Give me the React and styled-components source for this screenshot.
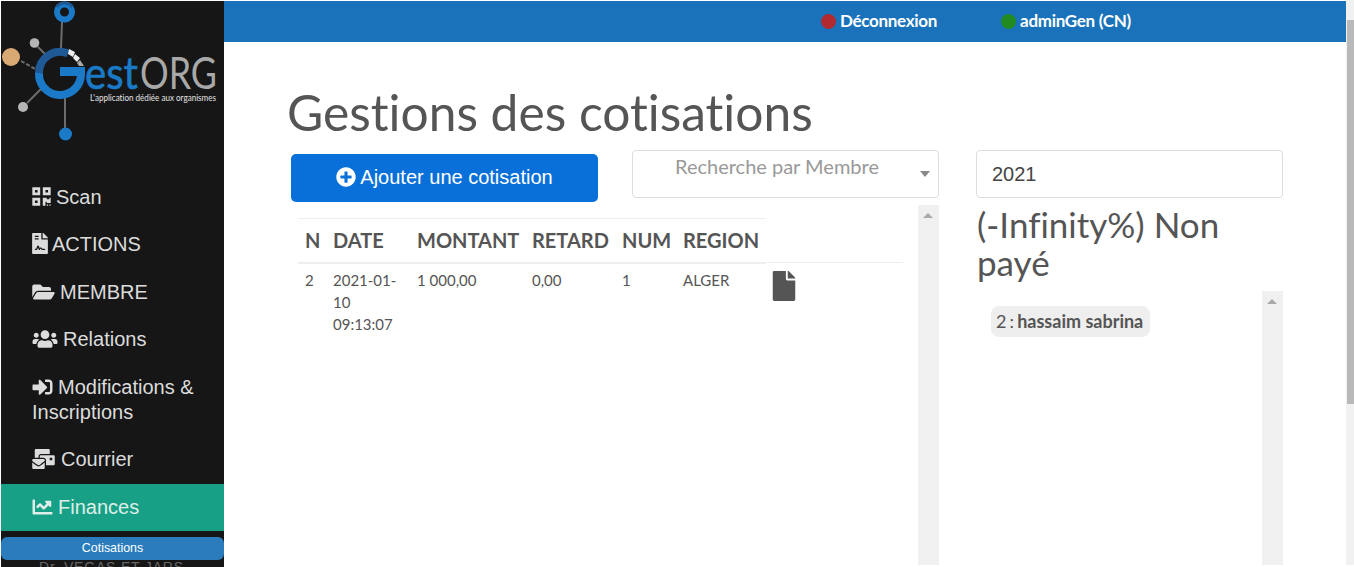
import React from "react";
import styled, { createGlobalStyle } from "styled-components";
import {
  FaQrcode, FaFileContract, FaFolderOpen, FaUsers, FaSignInAlt,
  FaMailBulk, FaChartLine, FaPlusCircle, FaFile,
} from "react-icons/fa";

const Global = createGlobalStyle`
  html, body { margin: 0; padding: 0; height: 567px; overflow: hidden; background: #fff; }
  #root { height: 567px; }
  * { box-sizing: border-box; }
`;

const Page = styled.div`
  display: flex;
  width: 1354px;
  height: 567px;
  overflow: hidden;
  padding: 1px 0 0 1px;
  background: #fff;
  font-family: "Lato", sans-serif;
  font-variant-ligatures: none;
  color: #555;
`;

const Sidebar = styled.aside`
  width: 223px;
  flex: none;
  background: #161616;
  overflow: hidden;
  font-family: "Liberation Sans", Arial, sans-serif;
`;

const LogoBox = styled.div`
  height: 172.6px;
  svg { display: block; }
`;

const NavList = styled.nav`
  display: flex;
  flex-direction: column;
`;

const NavItem = styled.div`
  padding: 11px 10px 11px 31px;
  font-size: 20px;
  line-height: 25px;
  min-height: 47px;
  margin-bottom: ${(p) => (p.$active ? "6px" : "0.5px")};
  color: ${(p) => (p.$active ? "#dfeee9" : "#dcdcdc")};
  background: ${(p) => (p.$active ? "#17a085" : "transparent")};
`;

const NavGlyph = styled.span`
  display: inline-block;
  width: ${(p) => p.$w}px;
  height: ${(p) => p.$h}px;
  margin-right: ${(p) => p.$gap || 0}px;
  vertical-align: -3px;
  svg { display: block; width: 100%; height: 100%; }
`;

const SubItem = styled.div`
  height: 23px;
  flex: none;
  border-radius: 6px;
  background: #2a7cbc;
  color: #fff;
  font-size: 12.4px;
  line-height: 22px;
  text-align: center;
`;

const SubFaded = styled.div`
  margin-top: 0;
  padding-left: 38px;
  font-size: 14px;
  line-height: 14px;
  color: #666;
  letter-spacing: 0.8px;
`;

const Main = styled.main`
  flex: 1;
  min-width: 0;
  display: flex;
  flex-direction: column;
`;

const TopBar = styled.header`
  height: 41px;
  flex: none;
  margin-right: 7px;
  background: #1a73ba;
  display: flex;
  align-items: center;
  padding-left: 597px;
  gap: 64px;
  font-weight: 700;
  font-size: 17px;
  color: #fff;
`;

const Status = styled.span`
  display: inline-flex;
  align-items: center;
  gap: 4px;
  padding-bottom: 2px;
  letter-spacing: -0.3px;
  &::before {
    content: "";
    width: 15px;
    height: 15px;
    margin-top: 2px;
    border-radius: 50%;
    background: ${(p) => p.$color};
  }
`;

const Body = styled.div`
  flex: 1;
  min-height: 0;
  padding: 39px 0 0 64px;
`;

const Title = styled.h1`
  margin: 0 0 0 -1px;
  height: 69px;
  font-weight: 400;
  font-size: 49.7px;
  line-height: 62px;
  color: #555;
`;

const Columns = styled.div`
  display: flex;
  align-items: flex-start;
`;

const LeftColumn = styled.section`
  width: 651px;
  flex: none;
`;

const Controls = styled.div`
  display: flex;
  align-items: flex-start;
  height: 55px;
`;

const AddButton = styled.button`
  width: 307px;
  height: 48px;
  margin: 4px 34px 0 3px;
  border: none;
  border-radius: 5px;
  background: #0a70d9;
  color: #fff;
  font-family: "Liberation Sans", Arial, sans-serif;
  font-size: 20px;
  display: flex;
  align-items: center;
  justify-content: center;
  gap: 4px;
  padding: 0 0 2px;
`;

const Select = styled.div`
  width: 307px;
  height: 48px;
  position: relative;
  border: 1px solid #ddd;
  border-radius: 4px;
  padding: 2px 0 0 42px;
  font-size: 20px;
  line-height: 26px;
  color: #999;
  &::after {
    content: "";
    position: absolute;
    right: 8px;
    top: 20px;
    border-left: 5px solid transparent;
    border-right: 5px solid transparent;
    border-top: 6px solid #888;
  }
`;

const ScrollPane = styled.div`
  display: flex;
  height: 360px;
`;

const TableWrap = styled.div`
  width: 630px;
  flex: none;
  padding: 13px 0 0 10px;
`;

const Table = styled.table`
  width: 605px;
  table-layout: fixed;
  border-collapse: collapse;
`;

const Th = styled.th`
  padding: 0 0 0 7px;
  height: 44px;
  text-align: left;
  font-size: 20px;
  font-weight: 700;
  color: #555;
  white-space: nowrap;
  border-top: ${(p) => (p.$blank ? "none" : "1px solid #eee")};
  border-bottom: ${(p) => (p.$blank ? "1px solid #eee" : "2px solid #eee")};
`;

const Td = styled.td`
  padding: 5px 0 0 7px;
  vertical-align: top;
  font-size: 15px;
  line-height: 22px;
  color: #555;
`;

const FileIcon = styled(FaFile)`
  display: block;
  width: 24px;
  height: 30px;
  margin-top: 3px;
  margin-left: -1px;
  color: #555;
`;

const Track = styled.div`
  width: 21px;
  flex: none;
  background: #f0f0f0;
  position: relative;
  &::before {
    content: "";
    position: absolute;
    left: 5px;
    top: 8px;
    border-left: 5px solid transparent;
    border-right: 5px solid transparent;
    border-bottom: 5px solid #aaa;
  }
`;

const RightColumn = styled.section`
  width: 307px;
  flex: none;
  margin-left: 37px;
`;

const YearInput = styled.div`
  height: 48px;
  border: 1px solid #ddd;
  border-radius: 4px;
  padding: 0 15px;
  font-family: "Liberation Sans", Arial, sans-serif;
  font-size: 20px;
  line-height: 46px;
  color: #444;
`;

const Ratio = styled.h2`
  margin: 7px 0 10px 1px;
  font-weight: 400;
  font-size: 35px;
  line-height: 38px;
  color: #555;
`;

const MemberPane = styled.div`
  display: flex;
  height: 274px;
`;

const MemberList = styled.div`
  flex: 1;
  padding: 15px 0 0 15px;
`;

const Chip = styled.span`
  display: inline-block;
  height: 31px;
  padding: 0 7px 0 5px;
  border-radius: 8px;
  background: #eee;
  font-size: 18px;
  line-height: 31px;
  color: #555;
  word-spacing: -1.5px;
  b { font-weight: 700; word-spacing: 0; }
`;

const PageScroll = styled.div`
  width: 8px;
  position: absolute;
  right: 0;
  top: 0;
  height: 565px;
  background: #f1f1f1;
  &::after {
    content: "";
    position: absolute;
    top: 20px;
    left: 1px;
    right: 0;
    height: 384px;
    background: #b9b9b9;
  }
`;

const LogoText = styled.text`
  font-family: "Lato", sans-serif;
`;

function Logo() {
  return (
    <svg width="223" height="173" viewBox="1 1 223 173">
      <g stroke="#6d6d6d" strokeWidth="2" fill="none">
        <line x1="62" y1="22" x2="61" y2="48" />
        <line x1="38" y1="47" x2="45" y2="54" />
        <line x1="27" y1="103" x2="42" y2="88" />
        <line x1="65" y1="98" x2="65" y2="128" />
        <line x1="21" y1="61" x2="35" y2="69" strokeDasharray="4 2" />
      </g>
      <circle cx="64.5" cy="12" r="7.5" fill="none" stroke="#1a7ac8" strokeWidth="6" />
      <path d="M56.5 7 A10 10 0 0 1 72.5 7" fill="none" stroke="#1f5a96" strokeWidth="3" />
      <circle cx="34.5" cy="43" r="4.8" fill="#b5b5b5" />
      <circle cx="11" cy="57" r="9" fill="#d9a974" />
      <circle cx="23" cy="107" r="5" fill="#b5b5b5" />
      <circle cx="65.5" cy="134" r="6.5" fill="#1a7ac8" />
      <path d="M39 73 A21 21 0 0 1 68 53.5" fill="none" stroke="#1f5a96" strokeWidth="8" />
      <path d="M39 73 A21 21 0 0 0 81 75" fill="none" stroke="#1a7ac8" strokeWidth="8" />
      <path d="M60 67 H85 V76 H60 Z" fill="#1a7ac8" />
      <path d="M69 49 L75 52 L73 57 L68 54 Z" fill="#eee" />
      <path d="M75 54 L80 58 L77 62 L73 58 Z" fill="#eee" />
      <path d="M80 60 L84 66 L79 66 L77 63 Z" fill="#aaa" />
      <LogoText x="85" y="89" fontSize="44" fontWeight="400" stroke="#1a7ac8" strokeWidth="0.6" fill="#1a7ac8" textLength="53" lengthAdjust="spacingAndGlyphs">est</LogoText>
      <LogoText x="140" y="89" fontSize="44" fill="#a8a8a8" textLength="77" lengthAdjust="spacingAndGlyphs">ORG</LogoText>
      <LogoText x="90" y="100.5" fontSize="10" fill="#e4e4e4" textLength="126" lengthAdjust="spacingAndGlyphs">L'application dédiée aux organismes</LogoText>
    </svg>
  );
}

const nav = [
  [FaQrcode, "Scan", 19, 21, 5],
  [FaFileContract, "ACTIONS", 16, 21, 4],
  [FaFolderOpen, "MEMBRE", 23, 20, 5],
  [FaUsers, "Relations", 26, 20, 5],
  [FaSignInAlt, "Modifications & Inscriptions", 21, 20, 5],
  [FaMailBulk, "Courrier", 23, 20, 6],
];

const rows = ["N", "DATE", "MONTANT", "RETARD", "NUM", "REGION"];
const widths = [28, 84, 115, 90, 61, 90, 137];

export default function App() {
  return (
    <Page>
      <Global />
      <Sidebar>
        <LogoBox><Logo /></LogoBox>
        <NavList>
          {nav.map(([Icon, label, w, h, gap]) => (
            <NavItem key={label}>
              <NavGlyph $w={w} $h={h} $gap={gap}><Icon /></NavGlyph>{label}
            </NavItem>
          ))}
          <NavItem $active>
            <NavGlyph $w={21} $h={20} $gap={5}><FaChartLine /></NavGlyph>Finances
          </NavItem>
          <SubItem>Cotisations</SubItem>
          <SubFaded>Dr. VEGAS ET JARS</SubFaded>
        </NavList>
      </Sidebar>
      <Main>
        <TopBar>
          <Status $color="#b02a30">Déconnexion</Status>
          <Status $color="#228b22">adminGen (CN)</Status>
        </TopBar>
        <Body>
          <Title>Gestions des cotisations</Title>
          <Columns>
            <LeftColumn>
              <Controls>
                <AddButton><FaPlusCircle size={20} /> Ajouter une cotisation</AddButton>
                <Select>Recherche par Membre</Select>
              </Controls>
              <ScrollPane>
                <TableWrap>
                  <Table>
                    <colgroup>{widths.map((w, i) => <col key={i} width={w} />)}</colgroup>
                    <thead>
                      <tr>
                        {rows.map((r) => <Th key={r}>{r}</Th>)}
                        <Th $blank />
                      </tr>
                    </thead>
                    <tbody>
                      <tr>
                        <Td>2</Td>
                        <Td>2021-01-10 09:13:07</Td>
                        <Td>1 000,00</Td>
                        <Td>0,00</Td>
                        <Td>1</Td>
                        <Td>ALGER</Td>
                        <Td><FileIcon /></Td>
                      </tr>
                    </tbody>
                  </Table>
                </TableWrap>
                <Track />
              </ScrollPane>
            </LeftColumn>
            <RightColumn>
              <YearInput>2021</YearInput>
              <Ratio>(-Infinity%) Non payé</Ratio>
              <MemberPane>
                <MemberList>
                  <Chip>2 : <b>hassaim sabrina</b></Chip>
                </MemberList>
                <Track />
              </MemberPane>
            </RightColumn>
          </Columns>
        </Body>
      </Main>
      <PageScroll />
    </Page>
  );
}
